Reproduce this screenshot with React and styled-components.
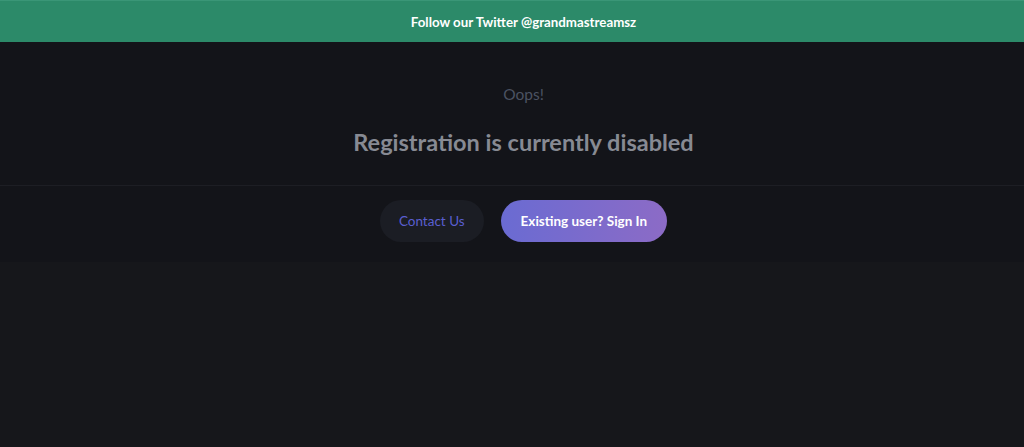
import React from 'react';
import styled, { createGlobalStyle } from 'styled-components';

const GlobalStyle = createGlobalStyle`
	html, body { margin: 0; padding: 0; background: #16171b; overflow: hidden; }
	body { font-family: Lato, "Noto Sans", sans-serif; -webkit-font-smoothing: antialiased; }
	* { box-sizing: border-box; }
`

// content in the capture is centred a little right of the viewport middle
const SHIFT = 23;

const Page = styled.div`
	min-height: 447px;
	display: flex;
	flex-direction: column;
	background: #16171b;
`

const Banner = styled.div`
	height: 42px;
	display: flex; align-items: center; justify-content: center;
	padding-left: ${SHIFT}px;
	background: #2c8a69;
	border-top: 1px solid #3a9677;
	color: #fff; font-size: 13.3px; font-weight: 700;
`

const Card = styled.section`
	background: #131419;
`

const CardHead = styled.header`
	height: 144px;
	display: flex; flex-direction: column; align-items: center;
	padding: 42px 0 0 ${SHIFT}px;
	border-bottom: 1px solid #1d1e24;
`

const Overline = styled.p`
	margin: 0; font-size: 15.5px; line-height: 20px; color: #4b5262;
`

const Title = styled.h1`
	margin: 22px 0 0; font-size: 23.5px; font-weight: 700; line-height: 32px; color: #878a93;
`

const Actions = styled.div`
	height: 76px;
	display: flex; justify-content: center; align-items: flex-start;
	gap: 17px;
	padding: 14px 0 0 ${SHIFT}px;
`

const PillButton = styled.button`
	height: 42px; border: 0; border-radius: 21px;
	font-family: inherit; font-size: 13.5px; cursor: pointer;
	padding: 0 ${p => p.$primary ? 20 : 19}px;
	background: ${p => p.$primary ? 'linear-gradient(90deg, #6a6bd2 0%, #8c6bc6 100%)' : '#1b1d24'};
	color: ${p => p.$primary ? '#fff' : '#5a5fd0'};
	font-weight: ${p => p.$primary ? 700 : 400};
`

export default function App() {
	return (
		<Page>
			<GlobalStyle />
			<Banner>Follow our Twitter @grandmastreamsz</Banner>
			<Card>
				<CardHead>
					<Overline>Oops!</Overline>
					<Title>Registration is currently disabled</Title>
				</CardHead>
				<Actions>
					<PillButton>Contact Us</PillButton>
					<PillButton $primary>Existing user? Sign In</PillButton>
				</Actions>
			</Card>
		</Page>
	);
}
